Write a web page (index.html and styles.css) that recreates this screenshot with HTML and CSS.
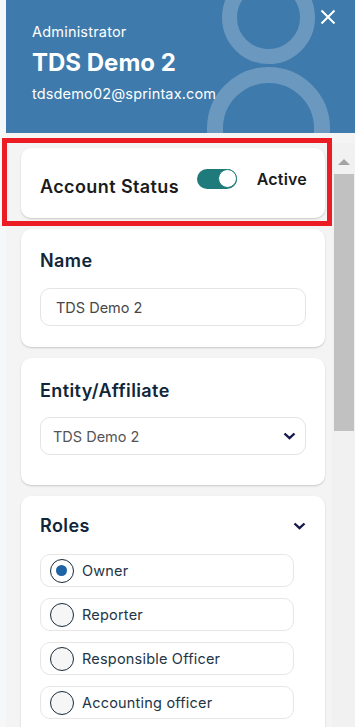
FILE: index.html
```html
<!DOCTYPE html>
<html lang="en">
<head>
  <meta charset="UTF-8">
  <meta name="viewport" content="width=device-width, initial-scale=1.0">
  <title>Edit User</title>
  <link rel="stylesheet" href="styles.css">
</head>
<body>
  <aside class="drawer">
    <header class="drawer-head">
      <span class="ring ring-top"></span>
      <span class="ring ring-bottom"></span>
      <button class="close-btn" aria-label="Close">
        <svg width="16" height="16" viewBox="0 0 16 16"><path d="M1.5 1.5 L14.5 14.5 M14.5 1.5 L1.5 14.5" stroke="#fff" stroke-width="2" fill="none"/></svg>
      </button>
      <div class="user-role">Administrator</div>
      <div class="user-name">TDS Demo 2</div>
      <div class="user-email">tdsdemo02@sprintax.com</div>
    </header>

    <div class="drawer-body">
      <div class="scroll-content">
        <section class="card status-card">
          <span class="card-title">Account Status</span>
          <div class="status">
            <span class="toggle"><span class="knob"></span></span>
            <span class="status-text">Active</span>
          </div>
        </section>

        <section class="card name-card">
          <div class="card-title">Name</div>
          <input class="field" value="TDS Demo 2" />
        </section>

        <section class="card entity-card">
          <div class="card-title">Entity/Affiliate</div>
          <div class="field select">
            <span>TDS Demo 2</span>
            <svg width="13" height="8" viewBox="0 0 13 8"><path d="M1.5 1.5 L6.5 6.2 L11.5 1.5" stroke="#15184a" stroke-width="2.4" fill="none"/></svg>
          </div>
        </section>

        <section class="card roles-card">
          <div class="roles-head">
            <span class="card-title">Roles</span>
            <svg width="13" height="8" viewBox="0 0 13 8"><path d="M1.5 1.5 L6.5 6.2 L11.5 1.5" stroke="#15184a" stroke-width="2.4" fill="none"/></svg>
          </div>
          <div class="role-list">
            <label class="role"><span class="radio checked"></span>Owner</label>
            <label class="role"><span class="radio"></span>Reporter</label>
            <label class="role"><span class="radio"></span>Responsible Officer</label>
            <label class="role"><span class="radio"></span>Accounting officer</label>
          </div>
        </section>
      </div>

      <div class="scrollbar">
        <span class="scroll-arrow"></span>
        <span class="scroll-thumb"></span>
      </div>
    </div>
  </aside>

  <div class="highlight"></div>
</body>
</html>
```

FILE: styles.css
```css
html {
  font-family: Inter, "Open Sans", sans-serif;
}

body {
  margin: 0;
  height: 727px;
  overflow: hidden;
  background-color: #f6f7f9;
  position: relative;
}

.drawer {
  margin-left: 6px;
  height: 727px;
  display: flex;
  flex-direction: column;
  background-color: #f4f4f4;
}

.drawer-head {
  position: relative;
  overflow: hidden;
  flex-shrink: 0;
  height: 133px;
  box-sizing: border-box;
  padding: 22px 26px 0;
  background-color: #3e7aac;
  color: white;
}
.ring {
  position: absolute;
  border-radius: 50%;
  border: 15px solid rgba(255, 255, 255, 0.23);
}
.ring-top {
  left: 216px;
  top: -29px;
  width: 63px;
  height: 63px;
}
.ring-bottom {
  left: 201px;
  top: 67px;
  width: 91px;
  height: 91px;
  border-width: 16px;
}
.close-btn {
  position: absolute;
  top: 9px;
  right: 19px;
  padding: 0;
  border: none;
  background: none;
  cursor: pointer;
}
.user-role {
  position: relative;
  font-size: 14.5px;
  letter-spacing: 0.2px;
  line-height: 20px;
}
.user-name {
  position: relative;
  margin-top: 5px;
  font-size: 24px;
  line-height: 32px;
  font-weight: 700;
}
.user-email {
  position: relative;
  margin-top: 5px;
  font-size: 14.5px;
  letter-spacing: 0.15px;
  line-height: 20px;
}

.drawer-body {
  flex: 1;
  display: flex;
  min-height: 0;
  overflow: hidden;
}
.scroll-content {
  flex: 1;
  padding: 15px 7px 0 15px;
  display: flex;
  flex-direction: column;
  gap: 11px;
}
.scrollbar {
  width: 23px;
  margin-top: 10px;
  background-color: #f1f1f1;
  display: flex;
  flex-direction: column;
  align-items: center;
}
.scroll-arrow {
  margin-top: 16px;
  width: 0;
  height: 0;
  border-left: 6px solid transparent;
  border-right: 6px solid transparent;
  border-bottom: 6px solid #a3a3a3;
}
.scroll-thumb {
  margin-top: 9px;
  width: 20px;
  height: 257px;
  background-color: #c1c1c1;
}

.card {
  flex-shrink: 0;
  background-color: white;
  border-radius: 10px;
  box-shadow: 0 1px 2px rgba(0, 0, 0, 0.18);
  padding: 20px 19px 21px;
}
.card-title {
  display: block;
  font-size: 18px;
  letter-spacing: 0.4px;
  line-height: 24px;
  font-weight: 600;
  color: #10263a;
}

.status-card {
  display: flex;
  justify-content: space-between;
  align-items: flex-start;
  padding: 21px 18px 19px 19px;
}
.status-card .card-title {
  margin-top: 6px;
  color: #1b1b1b;
}
.status {
  display: flex;
  align-items: center;
  gap: 20px;
}
.toggle {
  width: 40px;
  height: 20px;
  border-radius: 10px;
  background-color: #1e7a7b;
  display: flex;
  justify-content: flex-end;
}
.knob {
  width: 17px;
  height: 17px;
  border-radius: 50%;
  background-color: white;
  border: 1.5px solid #1e7a7b;
}
.status-text {
  font-size: 16px;
  letter-spacing: 0.2px;
  font-weight: 600;
  color: #1b1b1b;
}

.field {
  display: block;
  box-sizing: border-box;
  width: 100%;
  height: 38px;
  margin-top: 15px;
  padding: 0 15px;
  border: 1.5px solid #e4e4e4;
  border-radius: 10px;
  font-family: inherit;
  font-size: 14.5px;
  color: #474747;
  background-color: white;
  outline: none;
}
.entity-card {
  padding: 21px 19px 30px;
}
.entity-card .field {
  margin-top: 14px;
}
.select {
  display: flex;
  align-items: center;
  justify-content: space-between;
  padding: 0 9px 0 12px;
  color: #555;
}

.roles-card {
  padding-top: 18px;
}
.roles-head {
  display: flex;
  align-items: center;
  justify-content: space-between;
}
.role-list {
  margin-top: 16px;
  margin-right: 12px;
  display: flex;
  flex-direction: column;
  gap: 11px;
}
.role {
  display: flex;
  align-items: center;
  gap: 8px;
  height: 33px;
  box-sizing: border-box;
  padding-left: 9px;
  border: 1.5px solid #e6e6e6;
  border-radius: 10px;
  font-size: 14.5px;
  letter-spacing: 0.2px;
  color: #233545;
}
.radio {
  position: relative;
  width: 24px;
  height: 24px;
  box-sizing: border-box;
  border-radius: 50%;
  border: 1.5px solid #1a2a38;
  background-color: #f6f6f6;
}
.radio.checked {
  background-color: white;
}
.radio.checked::after {
  content: "";
  position: absolute;
  left: 5px;
  top: 5px;
  width: 11px;
  height: 11px;
  border-radius: 50%;
  background-color: #1d63a6;
}

.highlight {
  position: absolute;
  left: 2px;
  top: 138px;
  width: 320px;
  height: 78px;
  border: 5px solid #ec1c24;
}
```
